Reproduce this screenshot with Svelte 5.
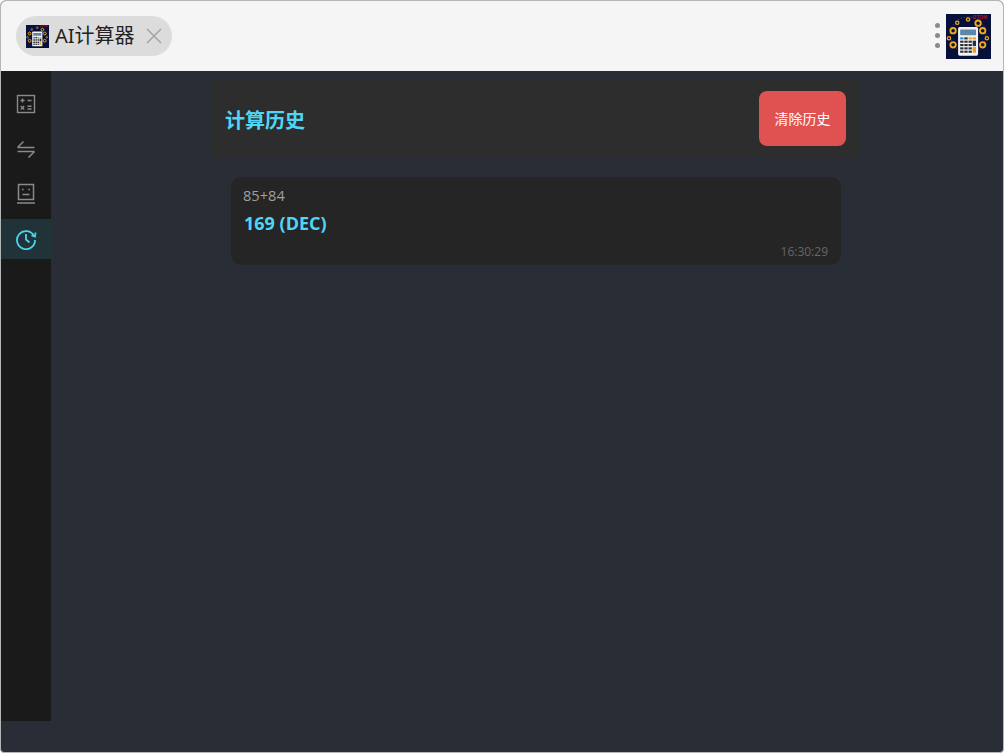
<script>
  const history = [
    { expression: '85+84', result: '169 (DEC)', time: '16:30:29' },
  ];
  const gears = [
    [17, 40, 1], [27, 21, 0], [53, 13, 0], [77, 22, 1], [88, 40, 1], [98, 58, 0], [88, 74, 1], [17, 74, 1], [7, 58, 0],
  ];
</script>

{#snippet logo(size)}
  <svg class="logo" width={size} height={size} viewBox="0 0 108 108">
    <rect width="108" height="108" fill="#06103a" />
    <text x="63" y="11" font-size="12" font-weight="700" fill="#b01030" font-family="Liberation Sans, sans-serif">OTOM</text>
    <circle cx="53" cy="50" r="43" fill="none" stroke="#c88a20" stroke-width="1.5" stroke-dasharray="2 6" />
    {#each gears as [cx, cy, big]}
      <circle {cx} {cy} r={big ? 6.5 : 4} fill="none" stroke="#eda81e" stroke-width={big ? 4.5 : 3} />
    {/each}
    <rect x="29" y="31" width="48" height="69" rx="4" fill="#f2f2f0" />
    <rect x="34" y="37" width="38" height="14" rx="1" fill="#5d86ad" />
    <rect x="34" y="56" width="8" height="5" fill="#2a86d8" />
    <rect x="44" y="56" width="8" height="5" fill="#333" />
    <rect x="54" y="56" width="8" height="5" fill="#f0a020" />
    <rect x="64" y="56" width="8" height="5" fill="#f0a020" />
    {#each [64, 72, 80, 88] as y}
      <rect x="34" {y} width="8" height="5" fill="#2b2f3a" />
      <rect x="44" {y} width="8" height="5" fill="#2b2f3a" />
      <rect x="54" {y} width="8" height="5" fill="#2b2f3a" />
    {/each}
    <rect x="64" y="64" width="8" height="13" fill="#2b2f3a" />
    <rect x="64" y="79" width="8" height="14" fill="#f0a020" />
  </svg>
{/snippet}

<div class="window">
  <header class="topbar">
    <div class="tab">
      {@render logo(23)}
      <span class="tab-title">AI计算器</span>
      <svg class="tab-close" width="18" height="18" viewBox="0 0 18 18">
        <path d="M2 2 L16 16 M16 2 L2 16" stroke="#a3a3a3" stroke-width="1.5" fill="none" />
      </svg>
    </div>
    <div class="top-right">
      <div class="dots"><i></i><i></i><i></i></div>
      {@render logo(45)}
    </div>
  </header>

  <div class="body">
    <nav class="sidebar">
      <button class="nav-item" aria-label="计算器">
        <svg width="20" height="20" viewBox="0 0 20 20" fill="none" stroke="#8a8a8a" stroke-width="1.4">
          <rect x="1.5" y="1.5" width="17" height="17" />
          <path d="M4.5 6.5h4M6.5 4.5v4M11.5 6.5h4M4.8 12l3.4 3.4M8.2 12l-3.4 3.4M11.5 12.2h4M11.5 15h4" />
        </svg>
      </button>
      <button class="nav-item" aria-label="转换">
        <svg width="20" height="20" viewBox="0 0 20 20" fill="none" stroke="#8a8a8a" stroke-width="1.5">
          <path d="M1.5 8.5h17M1.5 8.5l6-6M1.5 12.5h17M18.5 12.5l-6 6" />
        </svg>
      </button>
      <button class="nav-item" aria-label="AI">
        <svg width="20" height="22" viewBox="0 0 20 22" fill="none" stroke="#8a8a8a" stroke-width="1.5">
          <rect x="2.5" y="1.5" width="15" height="15" />
          <path d="M6 6.5h1.6M12.4 6.5h1.6M6.5 11.5h7M1 20h18" />
        </svg>
      </button>
      <button class="nav-item active" aria-label="历史">
        <svg width="22" height="22" viewBox="0 0 22 22" fill="none" stroke="#4fd0ee" stroke-width="1.8">
          <path d="M19 8 A9 9 0 1 0 20 12" />
          <path d="M16.5 7.5 L20 8.5 L20.5 4.5" />
          <path d="M11 6v5.5l3.5 3" />
        </svg>
      </button>
    </nav>

    <main class="main">
      <div class="content">
        <div class="panel-head">
          <h2>计算历史</h2>
          <button class="clear">清除历史</button>
        </div>
        <div class="list">
          {#each history as item}
            <div class="card">
              <div class="expr">{item.expression}</div>
              <div class="result">{item.result}</div>
              <div class="time">{item.time}</div>
            </div>
          {/each}
        </div>
      </div>
    </main>
  </div>
</div>

<style>
  :global(body) {
    background: #fff;
  }
  .window {
    box-sizing: border-box;
    width: 1004px;
    height: 753px;
    border: 1px solid #b5b5b5;
    border-radius: 6px 6px 4px 4px;
    overflow: hidden;
    display: flex;
    flex-direction: column;
    background: #292d36;
    font-family: "Open Sans", "Noto Sans CJK SC", sans-serif;
  }
  .topbar {
    height: 70px;
    flex: none;
    background: #f5f5f5;
    display: flex;
    align-items: center;
    justify-content: space-between;
    padding: 0 12px 0 15px;
  }
  .tab {
    height: 40px;
    width: 156px;
    box-sizing: border-box;
    border-radius: 20px;
    background: #dcdcdc;
    display: flex;
    align-items: center;
    padding-left: 10px;
  }
  .tab-title {
    margin-left: 6px;
    font-size: 20px;
    line-height: 24px;
    color: #222;
    font-family: "Noto Sans", "Noto Sans CJK SC", sans-serif;
  }
  .tab-close {
    margin-left: 10px;
  }
  .logo {
    display: block;
    flex: none;
  }
  .top-right {
    display: flex;
    align-items: center;
    gap: 6px;
  }
  .dots {
    display: flex;
    flex-direction: column;
    gap: 5px;
    margin-bottom: 2px;
  }
  .dots i {
    display: block;
    width: 5px;
    height: 5px;
    border-radius: 50%;
    background: #8a8a8a;
  }
  .body {
    flex: 1;
    display: flex;
    padding-bottom: 31px;
    min-height: 0;
  }
  .sidebar {
    width: 50px;
    flex: none;
    background: #1a1a1a;
    display: flex;
    flex-direction: column;
    padding-top: 13px;
  }
  .nav-item {
    width: 50px;
    height: 40px;
    margin-bottom: 5px;
    padding: 0;
    border: 0;
    background: none;
    display: flex;
    align-items: center;
    justify-content: center;
  }
  .nav-item.active {
    background: #203339;
  }
  .main {
    flex: 1;
    display: flex;
    justify-content: center;
    padding: 9px 0 0 17px;
  }
  .content {
    width: 649px;
  }
  .panel-head {
    height: 77px;
    box-sizing: border-box;
    background: #2d2d2d;
    display: flex;
    align-items: center;
    justify-content: space-between;
    padding: 0 14px;
    border-radius: 4px;
  }
  .panel-head h2 {
    margin: 2px 0 0;
    font-size: 20px;
    font-weight: 700;
    color: #4fd6f7;
  }
  .clear {
    width: 87px;
    height: 55px;
    border: 0;
    border-radius: 8px;
    background: #e05252;
    color: #fff;
    font-family: inherit;
    font-size: 14px;
    padding: 0 0 2px;
  }
  .list {
    padding: 20px 19px 0 20px;
  }
  .card {
    box-sizing: border-box;
    height: 88px;
    padding: 7px 12px 0 11px;
    background: #252525;
    border: 1px solid #262626;
    border-radius: 10px;
  }
  .expr {
    font-size: 14.6px;
    line-height: 20px;
    color: #a0a0a0;
  }
  .result {
    margin-top: 6px;
    margin-left: 1px;
    font-size: 18px;
    line-height: 24px;
    font-weight: 700;
    color: #4fd6f7;
  }
  .time {
    margin-top: 9px;
    text-align: right;
    font-size: 12px;
    line-height: 16px;
    color: #666;
  }
</style>
